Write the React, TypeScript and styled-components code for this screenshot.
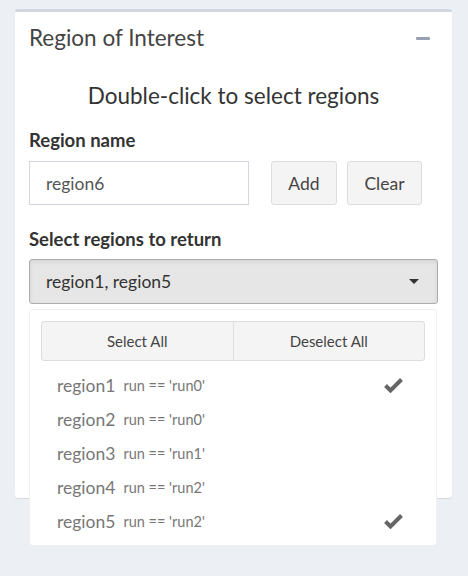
import React from "react";
import styled, { createGlobalStyle } from "styled-components";

const GlobalStyle = createGlobalStyle`
  html, body { margin: 0; padding: 0; background: #ecf0f5; }
  body { font-family: Lato, "Open Sans", sans-serif; color: #333; }
  * { box-sizing: border-box; }
`;

const Page = styled.div`
  padding: 9px 16px 0 15px;
  min-height: 576px;
`;

const Box = styled.div`
  position: relative;
  background: #fff;
  border-top: 3px solid #d2d6de;
  border-radius: 3px;
  box-shadow: 0 1px 1px rgba(0, 0, 0, 0.1);
  height: 489px;
`;

const BoxHeader = styled.div`
  display: flex;
  align-items: center;
  justify-content: space-between;
  padding: 13px 22px 13px 14px;
`;

const Title = styled.h3`
  margin: 0;
  font-size: 22.5px;
  line-height: 26px;
  font-weight: 400;
  color: #444;
`;

const Collapse = styled.span`
  display: block;
  width: 14px;
  height: 3px;
  background: #97a0b3;
  border-radius: 1px;
`;

const BoxBody = styled.div`
  padding: 0 14px;
  display: flex;
  flex-direction: column;
`;

const Heading = styled.h4`
  margin: 19px 0 0;
  text-align: center;
  font-size: 22.5px;
  line-height: 26px;
  font-weight: 400;
  color: #333;
`;

const Label = styled.label<{ $gap: number }>`
  display: block;
  margin-top: ${(p) => p.$gap}px;
  font-size: 18.5px;
  line-height: 20px;
  font-weight: 700;
  color: #333;
`;

const InputRow = styled.div`
  display: flex;
  align-items: center;
  margin-top: 11px;
  height: 44px;
`;

const TextInput = styled.div`
  width: 220px;
  height: 44px;
  border: 1px solid #d2d6de;
  padding: 0 16px;
  display: flex;
  align-items: center;
  font-size: 17.5px;
  color: #555;
`;

const Btn = styled.button<{ $ml: number; $w: number }>`
  margin-left: ${(p) => p.$ml}px;
  width: ${(p) => p.$w}px;
  height: 44px;
  background: #f4f4f4;
  border: 1px solid #ddd;
  border-radius: 3px;
  font-family: inherit;
  font-size: 17.5px;
  color: #444;
  padding: 0;
`;

const SelectWrap = styled.div`
  position: relative;
  margin-top: 10px;
  width: 409px;
`;

const SelectButton = styled.div`
  height: 45px;
  background: #e6e6e6;
  border: 1px solid #adadad;
  border-radius: 3px;
  box-shadow: inset 0 2px 4px rgba(0, 0, 0, 0.08);
  display: flex;
  align-items: center;
  justify-content: space-between;
  padding: 0 18px 0 16px;
  font-size: 17.5px;
  color: #333;
`;

const Caret = styled.span`
  width: 0;
  height: 0;
  border-top: 5px solid #333;
  border-left: 5px solid transparent;
  border-right: 5px solid transparent;
`;

const Dropdown = styled.div`
  position: absolute;
  top: 50px;
  left: 0;
  width: 408px;
  background: #fff;
  border: 1px solid rgba(0, 0, 0, 0.06);
  border-radius: 4px;
  padding: 11px 11px 7px;
  z-index: 2;
`;

const ActionBar = styled.div`
  display: flex;
  height: 40px;
  border: 1px solid #ddd;
  border-radius: 3px;
  background: #f4f4f4;
  overflow: hidden;
`;

const ActionBtn = styled.div<{ $divider?: boolean }>`
  flex: 1;
  display: flex;
  align-items: center;
  justify-content: center;
  font-size: 15px;
  color: #444;
  border-left: ${(p) => (p.$divider ? "1px solid #ddd" : "none")};
`;

const OptionList = styled.ul`
  list-style: none;
  margin: 7px 0 0;
  padding: 0;
`;

const Option = styled.li`
  height: 34px;
  display: flex;
  align-items: center;
  padding: 0 22px 0 16px;
  color: #777;
`;

const OptName = styled.span`
  font-size: 17.5px;
`;

const OptSub = styled.small`
  font-size: 14.5px;
  margin-left: 8px;
  color: #777;
`;

const Check = styled.svg`
  margin-left: auto;
  width: 19px;
  height: 16px;
`;

const CheckIcon = () => (
  <Check viewBox="0 0 19 16">
    <path d="M1.5 8.5 L6.5 13.5 L17.5 2.5" fill="none" stroke="#666" strokeWidth="4" />
  </Check>
);

const options = [
  { name: "region1", run: "run0", selected: true },
  { name: "region2", run: "run0", selected: false },
  { name: "region3", run: "run1", selected: false },
  { name: "region4", run: "run2", selected: false },
  { name: "region5", run: "run2", selected: true },
];

export default function App() {
  return (
    <>
      <GlobalStyle />
      <Page>
        <Box>
          <BoxHeader>
            <Title>Region of Interest</Title>
            <Collapse />
          </BoxHeader>
          <BoxBody>
            <Heading>Double-click to select regions</Heading>
            <Label $gap={21}>Region name</Label>
            <InputRow>
              <TextInput>region6</TextInput>
              <Btn $ml={22} $w={66}>Add</Btn>
              <Btn $ml={10} $w={75}>Clear</Btn>
            </InputRow>
            <Label $gap={24}>Select regions to return</Label>
            <SelectWrap>
              <SelectButton>
                <span>region1, region5</span>
                <Caret />
              </SelectButton>
              <Dropdown>
                <ActionBar>
                  <ActionBtn>Select All</ActionBtn>
                  <ActionBtn $divider>Deselect All</ActionBtn>
                </ActionBar>
                <OptionList>
                  {options.map((o) => (
                    <Option key={o.name}>
                      <OptName>{o.name}</OptName>
                      <OptSub>run == '{o.run}'</OptSub>
                      {o.selected && <CheckIcon />}
                    </Option>
                  ))}
                </OptionList>
              </Dropdown>
            </SelectWrap>
          </BoxBody>
        </Box>
      </Page>
    </>
  );
}
